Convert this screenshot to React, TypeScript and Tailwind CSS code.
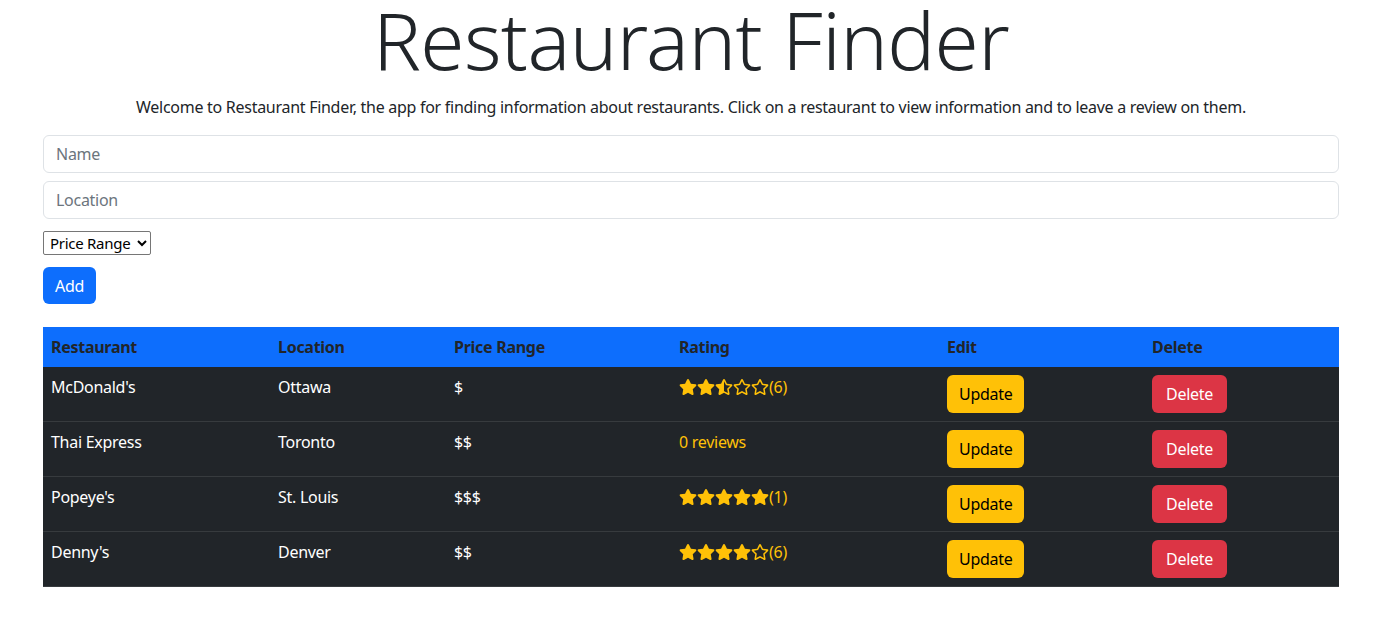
import { FaStar, FaStarHalfAlt, FaRegStar } from "react-icons/fa";

type Restaurant = {
  id: number;
  name: string;
  location: string;
  price: number;
  rating?: number;
  count: number;
};

const restaurants: Restaurant[] = [
  { id: 1, name: "McDonald's", location: "Ottawa", price: 1, rating: 2.5, count: 6 },
  { id: 2, name: "Thai Express", location: "Toronto", price: 2, count: 0 },
  { id: 3, name: "Popeye's", location: "St. Louis", price: 3, rating: 5, count: 1 },
  { id: 4, name: "Denny's", location: "Denver", price: 2, rating: 4, count: 6 },
];

function StarRating({ rating }: { rating: number }) {
  const stars = [];
  for (let i = 1; i <= 5; i++) {
    if (i <= rating) {
      stars.push(<FaStar key={i} className="h-4 w-[18px]" />);
    } else if (i === Math.ceil(rating) && !Number.isInteger(rating)) {
      stars.push(<FaStarHalfAlt key={i} className="h-4 w-[18px]" />);
    } else {
      stars.push(<FaRegStar key={i} className="h-4 w-[18px]" />);
    }
  }
  return <span className="inline-flex items-center">{stars}</span>;
}

function Rating({ r }: { r: Restaurant }) {
  if (!r.count || r.rating === undefined) {
    return <span className="text-[#ffc107]">0 reviews</span>;
  }
  return (
    <span className="inline-flex items-center text-[#ffc107]">
      <StarRating rating={r.rating} />
      <span>({r.count})</span>
    </span>
  );
}

export default function App() {
  return (
    <div className="min-h-screen bg-white font-['Noto_Sans',sans-serif] text-base leading-6 tracking-[-0.28px] text-[#212529]">
      <div className="ml-[43px] w-[1296px]">
        <h1 className="mb-[17px] text-center text-[80px] font-light leading-[78px] tracking-[-0.6px]">
          Restaurant Finder
        </h1>
        <p className="mb-4 text-center">
          Welcome to Restaurant Finder, the app for finding information about
          restaurants. Click on a restaurant to view information and to leave a
          review on them.
        </p>

        <form className="flex flex-col">
          <input
            placeholder="Name"
            className="mb-2 h-[38px] rounded-md border border-[#dee2e6] px-3 py-1.5 placeholder:text-[#6c757d]"
          />
          <input
            placeholder="Location"
            className="h-[38px] rounded-md border border-[#dee2e6] px-3 py-1.5 placeholder:text-[#6c757d]"
          />
          <div className="mt-3 flex">
            <select
              defaultValue="0"
              className="w-[108px] rounded-[2px] border border-[#767676] bg-white py-0 pl-0.5 text-[15px] text-black"
            >
              <option value="0" disabled>
                Price Range
              </option>
              <option value="1">$</option>
              <option value="2">$$</option>
              <option value="3">$$$</option>
              <option value="4">$$$$</option>
            </select>
          </div>
          <div className="mt-[12px]">
            <button
              type="button"
              className="h-[37px] rounded-md bg-[#0d6efd] px-3 text-white"
            >
              Add
            </button>
          </div>
        </form>

        <table className="mt-[23px] w-full table-fixed border-collapse text-left">
          <thead className="bg-[#0d6efd]">
            <tr>
              <th className="h-10 w-[227px] px-2 font-bold">Restaurant</th>
              <th className="w-[176px] px-2 font-bold">Location</th>
              <th className="w-[225px] px-2 font-bold">Price Range</th>
              <th className="w-[268px] px-2 font-bold">Rating</th>
              <th className="w-[205px] px-2 font-bold">Edit</th>
              <th className="w-[195px] px-2 font-bold">Delete</th>
            </tr>
          </thead>
          <tbody className="bg-[#212529] text-white">
            {restaurants.map((r) => (
              <tr key={r.id} className="border-b border-[#373b3e] align-top">
                <td className="p-2">{r.name}</td>
                <td className="p-2">{r.location}</td>
                <td className="p-2">{"$".repeat(r.price)}</td>
                <td className="p-2">
                  <Rating r={r} />
                </td>
                <td className="p-2">
                  <button className="h-[38px] rounded-md bg-[#ffc107] px-3 text-black">
                    Update
                  </button>
                </td>
                <td className="p-2">
                  <button className="h-[38px] rounded-md bg-[#dc3545] px-3.5 text-white">
                    Delete
                  </button>
                </td>
              </tr>
            ))}
          </tbody>
        </table>
      </div>
    </div>
  );
}
